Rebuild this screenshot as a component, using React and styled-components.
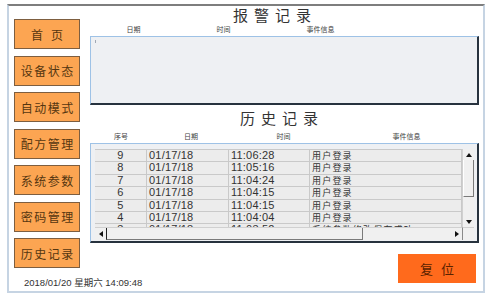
import React from 'react';
import styled, { createGlobalStyle } from 'styled-components';

const GlobalStyle = createGlobalStyle`
  html, body {
    margin: 0;
    padding: 0;
    background: #ffffff;
  }
  body {
    font-family: "Liberation Sans", "Noto Sans CJK SC", sans-serif;
  }
`;

const CJK = '"Noto Sans CJK SC", "Liberation Sans", sans-serif';
const NUM = '"Liberation Sans", "Noto Sans CJK SC", sans-serif';

const Frame = styled.div`
  box-sizing: border-box;
  margin: 4px 0 0 7px;
  width: 478px;
  height: 289px;
  border-top: 2px solid #7e7e7e;
  border-left: 2px solid #c6d4e3;
  border-right: 2px solid #c6d4e3;
  border-bottom: 2px solid #c6d4e3;
  display: flex;
  background: #ffffff;
`;

const Sidebar = styled.div`
  flex-shrink: 0;
  width: 66px;
  margin: 13px 0 0 5px;
  display: flex;
  flex-direction: column;
  gap: 6.5px;
`;

const NavButton = styled.div`
  box-sizing: border-box;
  height: 30px;
  background: #fca552;
  border: 1px solid #7d5e40;
  display: flex;
  align-items: center;
  justify-content: center;
  font-family: ${CJK};
  font-size: 12px;
  letter-spacing: ${p => (p.$wide ? '8px' : '1.5px')};
  text-indent: ${p => (p.$wide ? '8px' : '1.5px')};
  color: #553610;
`;

const DateLine = styled.div`
  margin: 2.5px 0 0 10px;
  white-space: nowrap;
  font-family: ${NUM};
  font-size: 9.5px;
  line-height: 12px;
  color: #333333;
`;

const Main = styled.div`
  flex-shrink: 0;
  width: 389px;
  margin-left: 10px;
  display: flex;
  flex-direction: column;
`;

const Title = styled.div`
  height: 16px;
  margin-top: ${p => p.$top}px;
  padding-left: ${p => p.$indent}px;
  font-family: ${CJK};
  font-size: 15px;
  line-height: 16px;
  letter-spacing: 6px;
  color: #333333;
`;

const HeaderRow = styled.div`
  box-sizing: border-box;
  height: ${p => p.$h}px;
  padding: 0 0 3px ${p => p.$pad}px;
  display: grid;
  grid-template-columns: ${p => p.$cols};
  align-items: end;
`;

const HeaderCell = styled.div`
  text-align: center;
  font-family: ${CJK};
  font-size: 7px;
  line-height: 8px;
  color: #444444;
`;

const SunkenBox = styled.div`
  box-sizing: border-box;
  height: ${p => p.$h}px;
  background: #eef0f3;
  border-top: 1px solid #9ec2e6;
  border-left: 1px solid #9ec2e6;
  border-right: 2px solid #27323e;
  border-bottom: 2px solid #27323e;
`;

const AlarmBox = styled(SunkenBox)`
  padding: 3px 0 0 4px;
`;

const Caret = styled.div`
  width: 1px;
  height: 3px;
  background: #a0a8b4;
`;

const TableBox = styled(SunkenBox)`
  padding: 5px 3px 1px 4px;
  display: grid;
  grid-template-columns: 367px 12px;
  grid-template-rows: 78px 13px;
`;

const Viewport = styled.div`
  overflow: hidden;
  border-top: 1px solid #c9c9c9;
  box-sizing: border-box;
`;

const Row = styled.div`
  display: grid;
  grid-template-columns: 52px 82px 81px 152px;
  height: 12.4px;
  background: #ececec;
`;

const Cell = styled.div`
  box-sizing: border-box;
  border-right: 1px solid #c9c9c9;
  border-bottom: 1px solid #c9c9c9;
  padding-left: ${p => (p.$center ? 0 : 2)}px;
  text-align: ${p => (p.$center ? 'center' : 'left')};
  font-family: ${p => (p.$cjk ? CJK : NUM)};
  font-size: ${p => (p.$cjk ? 9 : 11)}px;
  letter-spacing: ${p => (p.$cjk ? '1.2px' : '0.2px')};
  line-height: 11.4px;
  color: #333333;
  white-space: nowrap;
`;

const VScroll = styled.div`
  display: flex;
  flex-direction: column;
  background: #f0f0f0;
  border-left: 1px solid #d0d0d0;
  box-sizing: border-box;
`;

const HScroll = styled.div`
  display: flex;
  background: #f0f0f0;
  border-top: 1px solid #d0d0d0;
  box-sizing: border-box;
`;

const Corner = styled.div`
  background: #f0f0f0;
  border-left: 1px solid #8a8a8a;
  border-top: 1px solid #d0d0d0;
`;

const ArrowButton = styled.div`
  flex-shrink: 0;
  width: ${p => (p.$horizontal ? '11px' : 'auto')};
  height: ${p => (p.$horizontal ? 'auto' : '11px')};
  display: flex;
  align-items: center;
  justify-content: center;
  box-sizing: border-box;
`;

const triangles = {
  up: 'border-left: 3.5px solid transparent; border-right: 3.5px solid transparent; border-bottom: 4px solid #111;',
  down: 'border-left: 3.5px solid transparent; border-right: 3.5px solid transparent; border-top: 4px solid #111;',
  left: 'border-top: 3.5px solid transparent; border-bottom: 3.5px solid transparent; border-right: 4px solid #111;',
  right: 'border-top: 3.5px solid transparent; border-bottom: 3.5px solid transparent; border-left: 4px solid #111;',
};

const Triangle = styled.span`
  width: 0;
  height: 0;
  ${p => triangles[p.$dir]}
`;

const VThumb = styled.div`
  height: 37px;
  flex-shrink: 0;
  box-sizing: border-box;
  border-left: 1px solid #ffffff;
  border-bottom: 1px solid #7a7a7a;
  border-right: 1px solid #7a7a7a;
`;

const HThumb = styled.div`
  width: 257px;
  flex-shrink: 0;
  box-sizing: border-box;
  border-left: 1px solid #222222;
  border-right: 1px solid #7a7a7a;
  border-bottom: 1px solid #7a7a7a;
`;

const Track = styled.div`
  flex: 1;
`;

const ResetButton = styled.div`
  align-self: flex-end;
  margin: 11px 3px 0 0;
  width: 78px;
  height: 29px;
  background: #ff6a1c;
  display: flex;
  align-items: center;
  justify-content: center;
  font-family: ${CJK};
  font-size: 13px;
  letter-spacing: 8px;
  text-indent: 8px;
  color: #5a2200;
`;

const navItems = ['首页', '设备状态', '自动模式', '配方管理', '系统参数', '密码管理', '历史记录'];

const records = [
  { id: '9', date: '01/17/18', time: '11:06:28', event: '用户登录' },
  { id: '8', date: '01/17/18', time: '11:05:16', event: '用户登录' },
  { id: '7', date: '01/17/18', time: '11:04:24', event: '用户登录' },
  { id: '6', date: '01/17/18', time: '11:04:15', event: '用户登录' },
  { id: '5', date: '01/17/18', time: '11:04:15', event: '用户登录' },
  { id: '4', date: '01/17/18', time: '11:04:04', event: '用户登录' },
  { id: '3', date: '01/17/18', time: '11:03:52', event: '系统参数修改保存成功' },
];

export default function App() {
  return (
    <>
      <GlobalStyle />
      <Frame>
        <Sidebar>
          {navItems.map(item => (
            <NavButton key={item} $wide={item.length === 2}>{item}</NavButton>
          ))}
          <DateLine>2018/01/20 星期六 14:09:48</DateLine>
        </Sidebar>

        <Main>
          <Title $top={1} $indent={143}>报警记录</Title>
          <HeaderRow $h={13} $pad={0} $cols="87px 93px 101px">
            <HeaderCell>日期</HeaderCell>
            <HeaderCell>时间</HeaderCell>
            <HeaderCell>事件信息</HeaderCell>
          </HeaderRow>
          <AlarmBox $h={69}>
            <Caret />
          </AlarmBox>

          <Title $top={5} $indent={150}>历史记录</Title>
          <HeaderRow $h={17} $pad={5} $cols="52px 88px 97px 149px">
            <HeaderCell>序号</HeaderCell>
            <HeaderCell>日期</HeaderCell>
            <HeaderCell>时间</HeaderCell>
            <HeaderCell>事件信息</HeaderCell>
          </HeaderRow>
          <TableBox $h={100}>
            <Viewport>
              {records.map(r => (
                <Row key={r.id}>
                  <Cell $center>{r.id}</Cell>
                  <Cell>{r.date}</Cell>
                  <Cell>{r.time}</Cell>
                  <Cell $cjk>{r.event}</Cell>
                </Row>
              ))}
            </Viewport>
            <VScroll>
              <ArrowButton><Triangle $dir="up" /></ArrowButton>
              <VThumb />
              <Track />
              <ArrowButton><Triangle $dir="down" /></ArrowButton>
            </VScroll>
            <HScroll>
              <ArrowButton $horizontal><Triangle $dir="left" /></ArrowButton>
              <HThumb />
              <Track />
              <ArrowButton $horizontal><Triangle $dir="right" /></ArrowButton>
            </HScroll>
            <Corner />
          </TableBox>

          <ResetButton>复位</ResetButton>
        </Main>
      </Frame>
    </>
  );
}
